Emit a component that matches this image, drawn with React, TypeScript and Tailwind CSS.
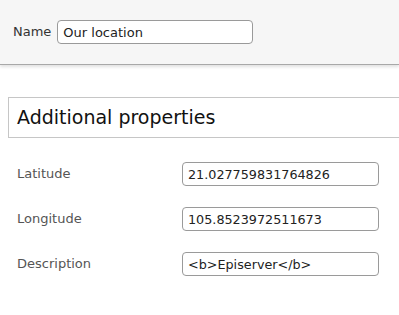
export default function App() {
    const rows = [
        { label: "Latitude", value: "21.027759831764826" },
        { label: "Longitude", value: "105.8523972511673" },
        { label: "Description", value: "<b>Episerver</b>" },
    ];

    return (
        <div className="w-[399px] h-[315px] overflow-hidden bg-white font-['DejaVu_Sans',Verdana,sans-serif]">
            {/* Top name bar */}
            <div className="h-[65px] bg-[#f6f6f6] border-b border-[#a8a8a8] shadow-[0_2px_3px_rgba(0,0,0,0.12)] flex items-center pl-[13px] gap-[6px]">
                <span className="text-[13px] text-[#333]">Name</span>
                <input
                    readOnly
                    value="Our location"
                    className="w-[196px] h-[24px] px-[5px] bg-white border border-[#9a9a9a] rounded-[4px] text-[13px] text-[#222] outline-none"
                />
            </div>

            {/* Section heading */}
            <div className="mt-[32px] ml-[8px] w-[420px] h-[41px] border border-[#c6c6c6] flex items-center pl-[8px]">
                <span className="text-[19px] text-[#111]">Additional properties</span>
            </div>

            {/* Properties */}
            <div className="mt-[24px] flex flex-col gap-[21px]">
                {rows.map((row) => (
                    <div key={row.label} className="flex items-center">
                        <span className="w-[182px] pl-[17px] text-[13px] text-[#555]">{row.label}</span>
                        <input
                            readOnly
                            value={row.value}
                            className="w-[197px] h-[24px] px-[5px] bg-white border border-[#9a9a9a] rounded-[4px] text-[12.75px] text-[#222] outline-none"
                        />
                    </div>
                ))}
            </div>
        </div>
    );
}
